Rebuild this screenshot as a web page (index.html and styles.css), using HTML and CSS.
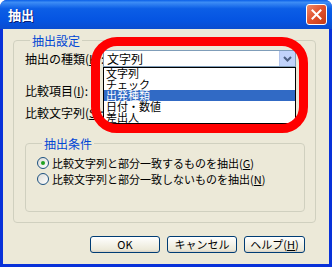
FILE: index.html
```html
<!DOCTYPE html>
<html>
<head>
  <meta charset="utf-8">
  <title>抽出</title>
  <link rel="stylesheet" href="styles.css">
</head>
<body>
  <div class="window">
    <div class="titlebar">
      <span class="title">抽出</span>
      <div class="close-btn">
        <svg width="11" height="11" viewBox="0 0 11 11"><path d="M1.5 1.5 L9.5 9.5 M9.5 1.5 L1.5 9.5" stroke="#fff" stroke-width="2" stroke-linecap="square"/></svg>
      </div>
    </div>
    <div class="content">
      <fieldset class="group outer">
        <legend>抽出設定</legend>
        <div class="row first">
          <span class="label">抽出の種類(<u>K</u>):</span>
          <div class="combo">
            <span class="combo-text">文字列</span>
            <span class="combo-btn">
              <svg width="9" height="6" viewBox="0 0 9 6"><path d="M1 1 L4.5 4.5 L8 1" fill="none" stroke="#4d6185" stroke-width="2"/></svg>
            </span>
            <ul class="dropdown">
              <li>文字列</li>
              <li>チェック</li>
              <li class="selected">出発種類</li>
              <li>日付・数値</li>
              <li>差出人</li>
            </ul>
          </div>
        </div>
        <div class="row second">
          <span class="label">比較項目(<u>I</u>):</span>
        </div>
        <div class="row">
          <span class="label">比較文字列(<u>S</u>):</span>
        </div>
        <fieldset class="group inner">
          <legend>抽出条件</legend>
          <label class="radio"><span class="dot checked"></span>比較文字列と部分一致するものを抽出(<u>G</u>)</label>
          <label class="radio"><span class="dot"></span>比較文字列と部分一致しないものを抽出(<u>N</u>)</label>
        </fieldset>
      </fieldset>
      <div class="buttons">
        <button class="btn">OK</button>
        <button class="btn">キャンセル</button>
        <button class="btn help">ヘルプ(<u>H</u>)</button>
      </div>
    </div>
    <div class="highlight"></div>
  </div>
</body>
</html>
```

FILE: styles.css
```css
body {
  margin: 0;
  font-family: "Noto Sans CJK JP", "Liberation Sans", sans-serif;
  font-size: 12px;
  color: #000;
  background: #fff;
}

.window {
  position: relative;
  width: 332px;
  height: 267px;
  box-sizing: border-box;
  background: #0831d9;
  border-radius: 7px 7px 0 0;
  overflow: hidden;
  display: flex;
  flex-direction: column;
}

.titlebar {
  height: 29px;
  flex: none;
  background: linear-gradient(to bottom, #0a5fe8 0%, #3d8df5 8%, #0c5ee6 30%, #0554e2 70%, #0a4cd0 100%);
  display: flex;
  align-items: center;
  justify-content: space-between;
  padding: 0 5px 0 8px;
}

.title {
  color: #fff;
  font-weight: bold;
  font-size: 13px;
  text-shadow: 1px 1px 0 #0a1e78;
}

.close-btn {
  width: 19px;
  height: 19px;
  border: 1px solid #fff;
  border-radius: 3px;
  background: linear-gradient(135deg, #f08a6a 0%, #e0502c 50%, #c43a15 100%);
  display: flex;
  align-items: center;
  justify-content: center;
}

.content {
  flex: 1;
  margin: 0 3px 3px 3px;
  background: #ece9d8;
  padding: 5px 13px 0 10px;
}

.group {
  border: 1px solid #d0d0bf;
  border-radius: 4px;
  margin: 0;
  min-width: 0;
}

.group legend {
  color: #0046d5;
  padding: 0 2px;
  margin-left: 5px;
  line-height: 13px;
}

.outer {
  padding: 3px 10px 10px 11px;
}

.row {
  display: flex;
  align-items: center;
  height: 17px;
  margin-bottom: 5px;
}

.row.first {
  margin-bottom: 15px;
}

.label {
  width: 78px;
  flex: none;
  white-space: nowrap;
}

.combo {
  position: relative;
  width: 193px;
  height: 17px;
  box-sizing: border-box;
  border: 1px solid #7f9db9;
  background: #fff;
  display: flex;
  align-items: center;
  justify-content: space-between;
}

.combo-text {
  padding-left: 3px;
}

.combo-btn {
  width: 15px;
  height: 15px;
  background: #c1d3fb;
  border-left: 1px solid #b2c4ec;
  display: flex;
  align-items: center;
  justify-content: center;
}

.dropdown {
  position: absolute;
  left: -1px;
  top: 16px;
  width: 191px;
  margin: 0;
  padding: 0;
  list-style: none;
  background: #fff;
  border: 1px solid #000;
}

.dropdown li {
  height: 11px;
  line-height: 11px;
  font-size: 11px;
  padding-left: 2px;
}

.dropdown li.selected {
  background: #316ac5;
  color: #fff;
}

.inner {
  padding: 5px 10px 24px 11px;
  margin-top: 16px;
}

.radio {
  display: flex;
  align-items: center;
  height: 16px;
  font-size: 11px;
}

.dot {
  width: 12px;
  height: 12px;
  box-sizing: border-box;
  border: 1px solid #1c5180;
  border-radius: 50%;
  background: linear-gradient(135deg, #dcdcd7, #fff);
  margin-right: 3px;
  position: relative;
}

.dot.checked::after {
  content: "";
  position: absolute;
  left: 3px;
  top: 3px;
  width: 4px;
  height: 4px;
  border-radius: 50%;
  background: #21a121;
}

.buttons {
  display: flex;
  justify-content: flex-end;
  gap: 7px;
  margin-top: 13px;
  padding-right: 11px;
}

.btn {
  width: 70px;
  height: 17px;
  border: 1px solid #003c74;
  border-radius: 3px;
  background: linear-gradient(to bottom, #fff, #ece9d8 85%, #d6d0c5);
  font-family: "Noto Sans CJK JP", "Liberation Sans", sans-serif;
  font-size: 11px;
  line-height: 13px;
  padding: 0;
}

.btn.help {
  width: 61px;
}

.highlight {
  position: absolute;
  left: 91px;
  top: 37px;
  width: 217px;
  height: 96px;
  box-sizing: border-box;
  border: 9px solid #ff0000;
  border-radius: 26px;
}
```
